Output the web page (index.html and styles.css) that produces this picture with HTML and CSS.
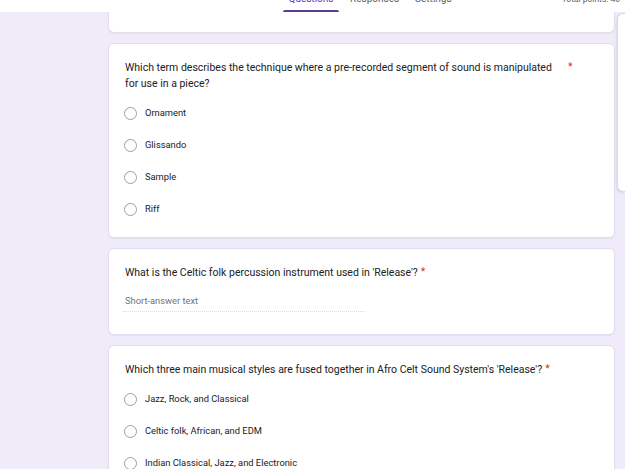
FILE: index.html
```html
<!DOCTYPE html>
<html>
<head>
<meta charset="utf-8">
<link rel="stylesheet" href="styles.css">
</head>
<body>
<header class="topbar">
  <nav class="tabs">
    <div class="tab tab-active"><span class="tab-label">Questions</span><span class="tab-line"></span></div>
    <div class="tab"><span class="tab-label">Responses</span></div>
    <div class="tab"><span class="tab-label">Settings</span></div>
  </nav>
  <div class="points">Total points: 40</div>
</header>
<div class="page">
  <main class="column">
    <section class="card card-cut"></section>

    <section class="card card-first">
      <div class="title-row">
        <div class="title">Which term describes the technique where a pre-recorded segment of sound is manipulated for use in a piece?</div>
        <span class="req">*</span>
      </div>
      <div class="options">
        <div class="option"><span class="radio"></span><span class="opt-text">Ornament</span></div>
        <div class="option"><span class="radio"></span><span class="opt-text">Glissando</span></div>
        <div class="option"><span class="radio"></span><span class="opt-text">Sample</span></div>
        <div class="option"><span class="radio"></span><span class="opt-text">Riff</span></div>
      </div>
    </section>

    <section class="card card-short">
      <div class="title-row">
        <div class="title">What is the Celtic folk percussion instrument used in 'Release'?</div>
        <span class="req">*</span>
      </div>
      <div class="short-answer">Short-answer text</div>
    </section>

    <section class="card">
      <div class="title-row">
        <div class="title">Which three main musical styles are fused together in Afro Celt Sound System's 'Release'?</div>
        <span class="req">*</span>
      </div>
      <div class="options">
        <div class="option"><span class="radio"></span><span class="opt-text">Jazz, Rock, and Classical</span></div>
        <div class="option"><span class="radio"></span><span class="opt-text">Celtic folk, African, and EDM</span></div>
        <div class="option"><span class="radio"></span><span class="opt-text">Indian Classical, Jazz, and Electronic</span></div>
      </div>
    </section>
  </main>
  <aside class="toolbar"></aside>
</div>
</body>
</html>
```

FILE: styles.css
```css
html, body {
  margin: 0;
  padding: 0;
  overflow: hidden;
  width: 625px;
  height: 469px;
}
body {
  background: #f0ebf8;
  font-family: Roboto, "Liberation Sans", Arial, sans-serif;
  color: #202124;
}
.topbar {
  height: 12px;
  background: #ffffff;
  overflow: hidden;
  display: flex;
  align-items: flex-start;
}
.tabs {
  display: flex;
  margin-left: 283px;
  margin-top: -6px;
  gap: 6px;
}
.tab {
  display: flex;
  flex-direction: column;
  justify-content: space-between;
  height: 18px;
  padding: 0 5px;
  box-sizing: border-box;
  font-size: 10px;
  line-height: 10px;
  color: #5f6368;
}
.tab-active {
  color: #673ab7;
  padding: 0;
  align-items: center;
}
.tab-active .tab-label {
  padding: 0 5px;
}
.tab-line {
  display: block;
  width: 56px;
  height: 2px;
  background: #5b3a93;
  border-radius: 2px 2px 0 0;
}
.points {
  margin-left: auto;
  margin-right: 5px;
  margin-top: -6px;
  font-size: 8.5px;
  line-height: 10px;
  color: #5f6368;
}
.page {
  display: flex;
  align-items: flex-start;
  padding-left: 108px;
  gap: 2px;
}
.column {
  width: 507px;
  flex-shrink: 0;
  display: flex;
  flex-direction: column;
  gap: 10px;
}
.card {
  background: #ffffff;
  border: 1px solid #e2ddee;
  border-radius: 6px;
  padding: 16px 16px 11px;
  box-sizing: border-box;
  box-shadow: 0 1px 1px rgba(60, 64, 67, 0.06);
}
.card-first {
  padding-bottom: 12px;
}
.card-cut {
  height: 21px;
  padding: 0;
  border-top: none;
  border-radius: 0 0 6px 6px;
}
.card-short {
  padding-bottom: 22px;
}
.title-row {
  display: flex;
  align-items: flex-start;
}
.title {
  max-width: 440px;
  font-size: 10.5px;
  line-height: 16px;
  color: #202124;
}
.req {
  margin-left: 3px;
  font-size: 10.5px;
  line-height: 14px;
  color: #d93025;
}
.options {
  margin-top: 5px;
  display: flex;
  flex-direction: column;
}
.option {
  height: 32px;
  display: flex;
  align-items: center;
  gap: 8px;
}
.radio {
  width: 13px;
  height: 13px;
  box-sizing: border-box;
  border: 1px solid #9aa0a6;
  border-radius: 50%;
  flex-shrink: 0;
  margin-left: -1px;
}
.opt-text {
  font-size: 9.33px;
  line-height: 14px;
  color: #202124;
}
.short-answer {
  margin-top: 13px;
  margin-left: -2px;
  width: 240px;
  padding: 0 0 3px 2px;
  font-size: 9.33px;
  line-height: 14px;
  color: #70757a;
  border-bottom: 1px dotted #dadce0;
}
.toolbar {
  flex-shrink: 0;
  width: 40px;
  height: 179px;
  margin-top: 1px;
  background: #ffffff;
  border: 1px solid #ddd6ee;
  border-right: none;
  border-radius: 6px 0 0 6px;
  box-sizing: border-box;
  box-shadow: -1px 1px 2px rgba(100, 80, 150, 0.12);
}
```
